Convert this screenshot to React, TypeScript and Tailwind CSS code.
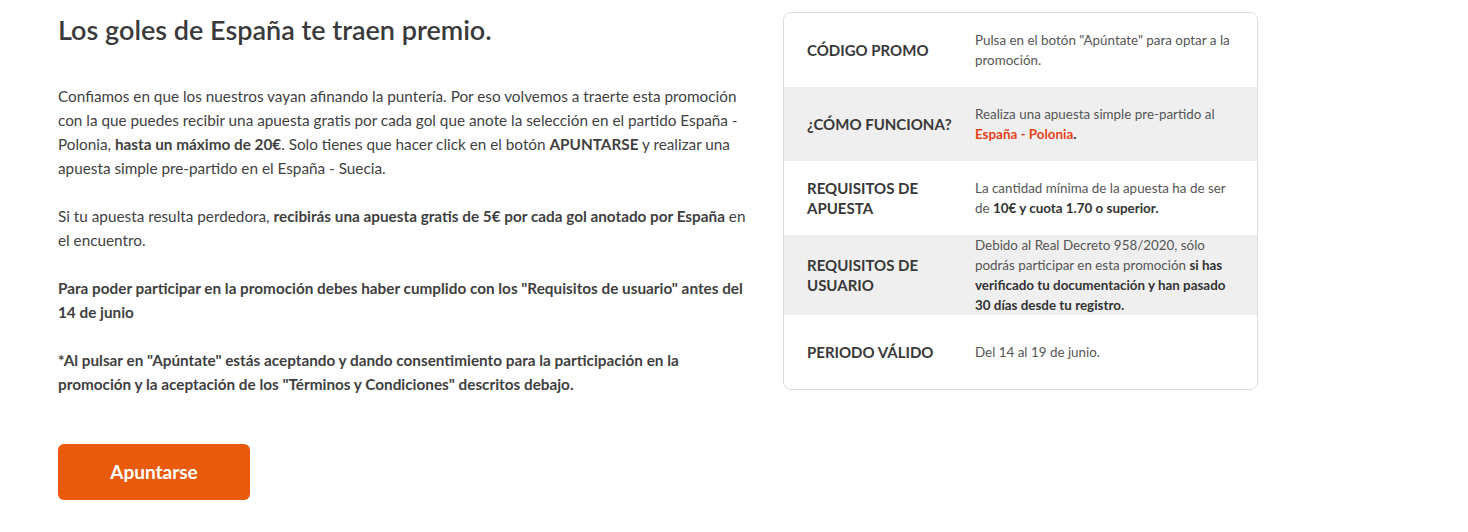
import React from 'react';

const rows = [
  {
    label: 'CÓDIGO PROMO',
    gray: false,
    body: <>Pulsa en el botón "Apúntate" para optar a la promoción.</>,
  },
  {
    label: '¿CÓMO FUNCIONA?',
    gray: true,
    body: (
      <>
        Realiza una apuesta simple pre-partido al{' '}
        <b className="font-bold text-[#e4431b]">España - Polonia</b>
        <b className="font-bold text-[#333]">.</b>
      </>
    ),
  },
  {
    label: 'REQUISITOS DE APUESTA',
    gray: false,
    body: (
      <>
        La cantidad mínima de la apuesta ha de ser de{' '}
        <b className="font-bold text-[#333]">10€ y cuota 1.70 o superior.</b>
      </>
    ),
  },
  {
    label: 'REQUISITOS DE USUARIO',
    gray: true,
    body: (
      <>
        Debido al Real Decreto 958/2020, sólo podrás participar en esta promoción{' '}
        <b className="font-bold text-[#333]">
          si has verificado tu documentación y han pasado 30 días desde tu registro.
        </b>
      </>
    ),
  },
  {
    label: 'PERIODO VÁLIDO',
    gray: false,
    body: <>Del 14 al 19 de junio.</>,
  },
];

export default function App() {
  return (
    <div
      className="w-[1468px] h-[532px] bg-white text-[#3b3b3b] overflow-hidden"
      style={{ fontFamily: 'Lato, "Noto Sans", sans-serif' }}
    >
      <div className="flex gap-[25px] pl-[58px] pt-[12px]">
        {/* Left column */}
        <div className="w-[700px] flex flex-col">
          <h1 className="text-[27px] leading-[36px] font-semibold text-[#3a3a3a]">
            Los goles de España te traen premio.
          </h1>

          <div className="mt-[36px] text-[15.3px] leading-[24px] text-[#3f3f3f] flex flex-col gap-[24px] whitespace-nowrap">
            <p>
              Confiamos en que los nuestros vayan afinando la puntería. Por eso volvemos a traerte esta promoción
              <br />
              con la que puedes recibir una apuesta gratis por cada gol que anote la selección en el partido España -
              <br />
              Polonia, <b className="font-bold">hasta un máximo de 20€</b>. Solo tienes que hacer click en el botón{' '}
              <b className="font-bold">APUNTARSE</b> y realizar una
              <br />
              apuesta simple pre-partido en el España - Suecia.
            </p>
            <p>
              Si tu apuesta resulta perdedora,{' '}
              <b className="font-bold">recibirás una apuesta gratis de 5€ por cada gol anotado por España</b> en
              <br />
              el encuentro.
            </p>
            <p className="font-bold">
              Para poder participar en la promoción debes haber cumplido con los "Requisitos de usuario" antes del
              <br />
              14 de junio
            </p>
            <p className="font-bold">
              *Al pulsar en "Apúntate" estás aceptando y dando consentimiento para la participación en la
              <br />
              promoción y la aceptación de los "Términos y Condiciones" descritos debajo.
            </p>
          </div>

          <button className="mt-[48px] w-[192px] h-[56px] rounded-[6px] bg-[#e95a0c] text-white text-[19px] font-bold">
            Apuntarse
          </button>
        </div>

        {/* Right card */}
        <div className="w-[475px] self-start border border-[#dcdcdc] rounded-[8px] overflow-hidden">
          {rows.map((r) => (
            <div
              key={r.label}
              className={`flex items-center min-h-[74px] pl-[23px] ${r.gray ? 'bg-[#efefef]' : 'bg-white'}`}
            >
              <div className="w-[168px] shrink-0 pr-[8px] text-[15px] leading-[20px] font-bold text-[#383838]">
                {r.label}
              </div>
              <div className="w-[263px] text-[13.4px] leading-[20px] text-[#555]">{r.body}</div>
            </div>
          ))}
        </div>
      </div>
    </div>
  );
}
